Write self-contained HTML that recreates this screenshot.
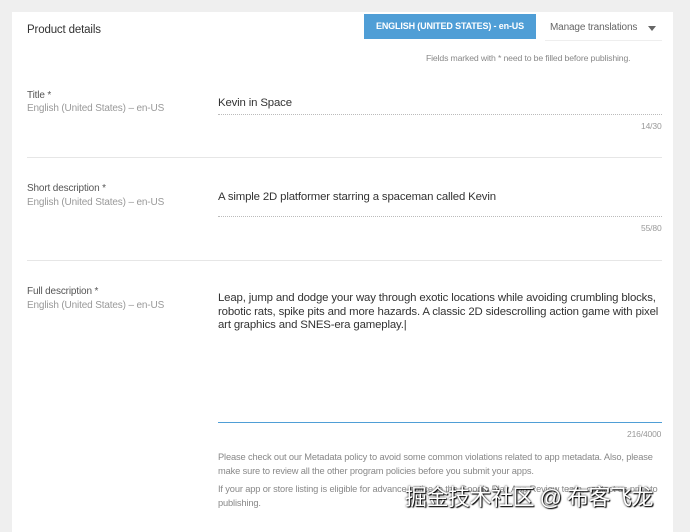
<!DOCTYPE html>
<html><head><style>
body{margin:0;width:690px;height:526px;background:#efefef;font-family:"Liberation Sans",sans-serif;overflow:hidden;position:relative;letter-spacing:-0.15px}
.card{position:absolute;left:12px;top:12px;width:661px;height:520px;background:#fff}
.a{position:absolute;white-space:nowrap}
.lbl{font-size:10px;color:#555}
.sub{font-size:10px;color:#999}
.val{font-size:11.4px;color:#333}
.cnt{font-size:8.5px;color:#999}
.hr{position:absolute;left:27px;width:635px;height:1px;background:#e6e6e6}
.ul{position:absolute;left:218px;width:444px;height:1px;border-top:1px dotted #bbb}
.note{font-size:9.3px;color:#888}
</style></head><body>
<div class="card"></div>
<div class="a" style="left:27px;top:24px;font-size:11.5px;color:#333">Product details</div>
<div class="a" style="left:364px;top:14px;width:172px;height:25px;background:#4f9ed6;color:#fff;font-size:9px;font-weight:bold;line-height:25px;text-align:center">ENGLISH (UNITED STATES) - en-US</div>
<div class="a" style="left:550px;top:22px;font-size:10px;color:#666">Manage translations</div>
<div class="a" style="left:648px;top:26px;width:0;height:0;border-left:4px solid transparent;border-right:4px solid transparent;border-top:5px solid #666"></div>
<div class="a" style="left:545px;top:40px;width:117px;height:1px;background:#eee"></div>
<div class="a note" style="left:426px;top:53px;font-size:8.7px">Fields marked with * need to be filled before publishing.</div>

<div class="a lbl" style="left:27px;top:90px">Title *</div>
<div class="a sub" style="left:27px;top:103px">English (United States) – en-US</div>
<div class="a val" style="left:218px;top:97px">Kevin in Space</div>
<div class="ul" style="top:114px"></div>
<div class="a cnt" style="left:641px;top:121px">14/30</div>
<div class="hr" style="top:157px"></div>

<div class="a lbl" style="left:27px;top:183px">Short description *</div>
<div class="a sub" style="left:27px;top:197px">English (United States) – en-US</div>
<div class="a val" style="left:218px;top:191px">A simple 2D platformer starring a spaceman called Kevin</div>
<div class="ul" style="top:216px"></div>
<div class="a cnt" style="left:641px;top:223px">55/80</div>
<div class="hr" style="top:260px"></div>

<div class="a lbl" style="left:27px;top:286px">Full description *</div>
<div class="a sub" style="left:27px;top:300px">English (United States) – en-US</div>
<div class="a val" style="left:218px;top:292px;line-height:13.5px;width:446px;white-space:normal">Leap, jump and dodge your way through exotic locations while avoiding crumbling blocks, robotic rats, spike pits and more hazards. A classic 2D sidescrolling action game with pixel art graphics and SNES-era gameplay.|</div>
<div class="a" style="left:218px;top:422px;width:444px;height:1px;background:#4f9ed6"></div>
<div class="a cnt" style="left:627px;top:429px">216/4000</div>
<div class="a note" style="left:218px;top:450px;line-height:14px;white-space:normal;width:444px">Please check out our Metadata policy to avoid some common violations related to app metadata. Also, please make sure to review all the other program policies before you submit your apps.</div>
<div class="a note" style="left:218px;top:482px;line-height:14px;white-space:normal;width:444px">If your app or store listing is eligible for advance notice to the Google Play App Review team, contact us prior to publishing.</div>
<div class="a" style="left:405px;top:480px;font-family:'Liberation Sans','Noto Sans CJK SC',sans-serif;font-size:22px;color:#fff;text-shadow:0 0 2px #000,1px 1px 1px #000;letter-spacing:-0.5px">掘金技术社区 @ 布客飞龙</div>
</body></html>
